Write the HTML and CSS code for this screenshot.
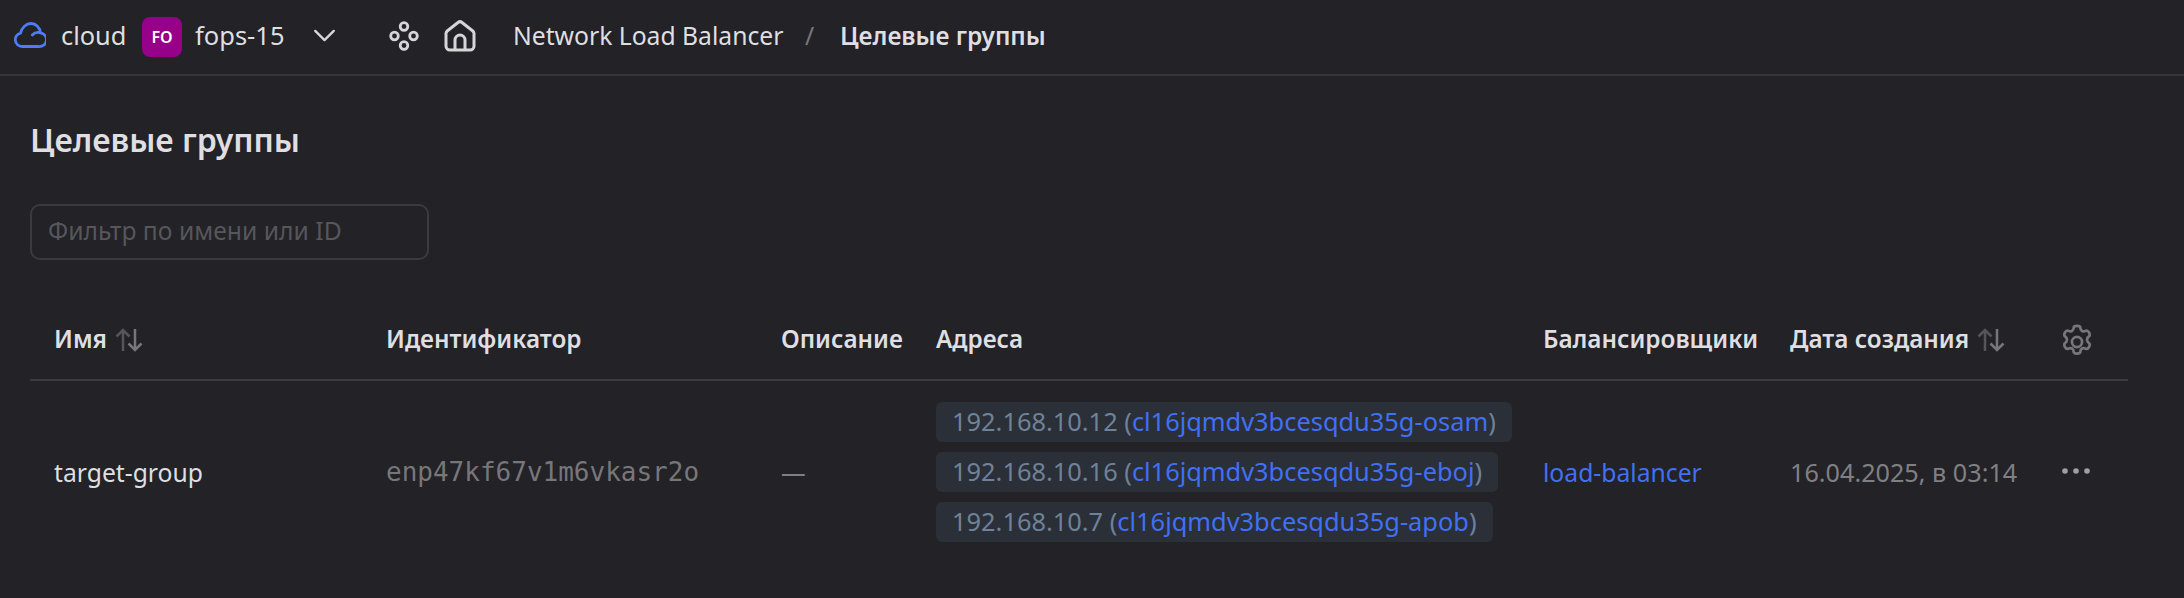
FILE: index.html
```html
<!DOCTYPE html>
<html>
    <head>
        <meta charset="utf-8">
        <title>Целевые группы</title>
        <link rel="stylesheet" href="styles.css">
    </head>
    <body>
        <header class="topbar">
            <svg class="cloud-icon" viewBox="0 0 32 26" fill="none"><path d="M8 24.500a6.800 6.800 0 0 1-1.500-13.400C8 5.500 12 1.500 17 1.500c5 0 9 4 9.500 9.300A6.900 6.900 0 0 1 24.500 24.500zM26.500 10.800c-3-.8-6-.2-8.200 2.200" stroke="#4c7cf6" stroke-width="2.800" stroke-linecap="round" stroke-linejoin="round"/></svg>
            <span class="label cloud-name">cloud</span>
            <span class="badge">FO</span>
            <span class="label folder-name">fops-15</span>
            <svg class="chevron" viewBox="0 0 24 14" fill="none"><path d="M2 2l10 10L22 2" stroke="#d6d6d8" stroke-width="2.500" stroke-linecap="round" stroke-linejoin="round"/></svg>
            <svg class="dots-icon" viewBox="0 0 30 30" fill="none" stroke="#d6d6d8" stroke-width="2.800"><circle cx="15" cy="5.500" r="3.800"/><circle cx="5.500" cy="15" r="3.800"/><circle cx="24.500" cy="15" r="3.800"/><circle cx="15" cy="24.500" r="3.800"/></svg>
            <svg class="home-icon" viewBox="0 0 32 32" fill="none" stroke="#d6d6d8" stroke-width="3" stroke-linejoin="round"><path d="M2 13.500c0-1 .4-1.800 1.200-2.500L14 2.500c1.200-1 2.800-1 4 0L28.800 11c.8.700 1.200 1.500 1.200 2.500V26a4 4 0 0 1-4 4H6a4 4 0 0 1-4-4z"/><path d="M11 30V20a5 5 0 0 1 10 0v10"/></svg>
            <span class="label crumb">Network Load Balancer</span>
            <span class="label crumb-sep">/</span>
            <span class="label crumb-current">Целевые группы</span>
        </header>
        <main class="content">
            <h1 class="title">Целевые группы</h1>
            <div class="filter">Фильтр по имени или ID</div>
            <table class="groups">
                <colgroup>
                    <col class="col-name"><col class="col-id"><col class="col-desc"><col class="col-addr"><col class="col-lb"><col class="col-date"><col class="col-act">
                </colgroup>
                <tr>
                    <th>Имя <svg class="sort" viewBox="0 0 28 24" fill="none" stroke-width="2.500"><path d="M8 23V2M1.500 8.500L8 2l6.500 6.500" stroke="#55555a"/><path d="M20 1v21M13.500 15.500L20 22l6.500-6.500" stroke="#77777b"/></svg></th>
                    <th>Идентификатор</th>
                    <th>Описание</th>
                    <th>Адреса</th>
                    <th>Балансировщики</th>
                    <th>Дата создания <svg class="sort" viewBox="0 0 28 24" fill="none" stroke-width="2.500"><path d="M8 23V2M1.500 8.500L8 2l6.500 6.500" stroke="#55555a"/><path d="M20 1v21M13.500 15.500L20 22l6.500-6.500" stroke="#77777b"/></svg></th>
                    <th><svg class="gear" viewBox="0 0 32 32" fill="none" stroke="#77777b" stroke-width="2.400" stroke-linejoin="round"><circle cx="16" cy="16" r="4.500"/><path d="M13 3.500c0-1 1-1.800 3-1.800s3 .8 3 1.800c0 2.500 2.500 3.800 4.500 2.600.9-.5 2.200-.2 3.200 1.500s.7 3-.2 3.500c-2.100 1.300-2.100 4.500 0 5.800.9.500 1.200 1.800.2 3.500s-2.300 2-3.200 1.500c-2-1.200-4.500.1-4.500 2.600 0 1-1 1.800-3 1.800s-3-.8-3-1.800c0-2.500-2.500-3.800-4.500-2.600-.9.500-2.200.2-3.200-1.500s-.7-3 .2-3.500c2.100-1.300 2.100-4.500 0-5.800-.9-.5-1.200-1.800-.2-3.500s2.300-2 3.200-1.500c2 1.200 4.500-.1 4.500-2.600z"/></svg></th>
                </tr>
                <tr>
                    <td class="name">target-group</td>
                    <td class="mono">enp47kf67v1m6vkasr2o</td>
                    <td class="muted">—</td>
                    <td>
                        <div class="chips">
                            <span class="chip">192.168.10.12 (<a>cl16jqmdv3bcesqdu35g-osam</a>)</span>
                            <span class="chip">192.168.10.16 (<a>cl16jqmdv3bcesqdu35g-eboj</a>)</span>
                            <span class="chip">192.168.10.7 (<a>cl16jqmdv3bcesqdu35g-apob</a>)</span>
                        </div>
                    </td>
                    <td><a>load-balancer</a></td>
                    <td class="muted date">16.04.2025, в 03:14</td>
                    <td><svg class="more" viewBox="0 0 30 6" fill="#a0a0a4"><circle cx="4" cy="3" r="2.800"/><circle cx="15" cy="3" r="2.800"/><circle cx="26" cy="3" r="2.800"/></svg></td>
                </tr>
            </table>
        </main>
    </body>
</html>
```
FILE: styles.css
```css
body{
    margin: 0;
    color: #dfdfe1;
    background-color: #222227;
    font-family: "Noto Sans", sans-serif;
    font-size: 24.7px;
}
a{
    color: #4170f4;
}

.topbar{
    display: flex;
    align-items: center;
    height: 74px;
    padding-left: 14px;
    border-bottom: 2px solid #35353a;
}
.label{
    padding-bottom: 4px;
}
.cloud-icon{
    width: 32px;
    height: 26px;
    margin-right: 15px;
    margin-bottom: 4px;
}
.cloud-name{
    width: 81px;
    font-size: 25.4px;
}
.badge{
    width: 40px;
    height: 40px;
    margin-right: 13px;
    border-radius: 8px;
    background-color: #970088;
    color: white;
    font-size: 16px;
    font-weight: 600;
    line-height: 40px;
    text-align: center;
}
.folder-name{
    width: 118px;
    font-size: 25.5px;
}
.chevron{
    width: 23px;
    height: 13px;
    margin-right: 53px;
    margin-bottom: 4px;
}
.dots-icon{
    width: 30px;
    height: 30px;
    margin-right: 25px;
    margin-bottom: 2px;
}
.home-icon{
    width: 32px;
    height: 32px;
    margin-right: 37px;
    margin-bottom: 2px;
}
.crumb{
    width: 292px;
}
.crumb-sep{
    width: 35px;
    color: #77777b;
}
.crumb-current{
    font-size: 24.4px;
    font-weight: 600;
}

.content{
    padding: 0 56px 0 30px;
}
.title{
    margin: 42px 0 42px;
    font-size: 32px;
    font-weight: 600;
    line-height: 44px;
}
.filter{
    width: 399px;
    height: 56px;
    padding-left: 16px;
    box-sizing: border-box;
    border: 2px solid #3a3a3f;
    border-radius: 10px;
    color: #56565b;
    line-height: 50px;
}

.groups{
    width: 2098px;
    margin-top: 40px;
    border-collapse: collapse;
    table-layout: fixed;
}
.col-name{ width: 332px; }
.col-id{ width: 395px; }
.col-desc{ width: 155px; }
.col-addr{ width: 607px; }
.col-lb{ width: 247px; }
.col-date{ width: 271px; }
.col-act{ width: 91px; }
th, td{
    padding: 0 0 0 24px;
    text-align: left;
    white-space: nowrap;
}
th{
    height: 77px;
    padding-bottom: 2px;
    font-size: 24.3px;
    font-weight: 600;
    border-bottom: 2px solid #3a3a3f;
    vertical-align: middle;
}
td{
    padding-top: 21px;
    padding-bottom: 24px;
}
.sort{
    width: 28px;
    height: 24px;
    vertical-align: -4px;
    margin-left: 2px;
}
.gear{
    display: block;
    width: 36px;
    height: 36px;
    margin: 6px 0 0 -2px;
}
.more{
    display: block;
    width: 30px;
    height: 6px;
    margin-bottom: 2px;
}
.mono{
    font-family: "DejaVu Sans Mono", monospace;
    font-size: 26px;
    color: #77777b;
}
.muted{
    color: #808084;
}
.date{
    font-size: 25.2px;
}
.chips{
    display: flex;
    flex-direction: column;
    align-items: flex-start;
    gap: 10px;
}
.chip{
    height: 40px;
    padding: 0 16px;
    border-radius: 6px;
    background-color: #2a2f38;
    color: #6f8298;
    font-size: 25.4px;
    line-height: 38px;
}
```
